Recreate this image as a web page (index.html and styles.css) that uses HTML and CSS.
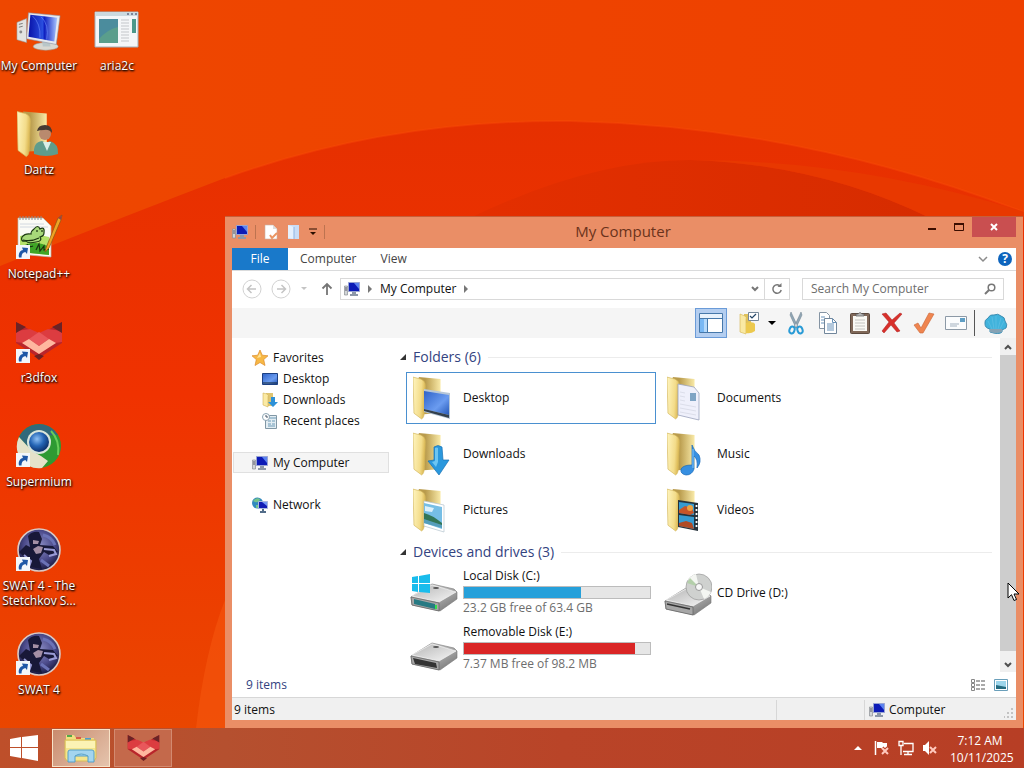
FILE: index.html
```html
<!DOCTYPE html>
<html lang="en">
<head>
  <meta charset="utf-8">
  <title>My Computer</title>
  <link rel="stylesheet" href="styles.css">
</head>
<body>
  <!-- shared icons -->
  <svg class="defs" aria-hidden="true">
    <defs>
      <linearGradient id="flap" x1="0" y1="0" x2="1" y2=".2"><stop offset="0" stop-color="#fff5bf"/><stop offset=".7" stop-color="#f3dc8a"/><stop offset="1" stop-color="#dcb955"/></linearGradient>
      <linearGradient id="back" x1="0" y1="0" x2="1" y2="0"><stop offset=".3" stop-color="#b99b4c"/><stop offset="1" stop-color="#f9eaa8"/></linearGradient>
      <linearGradient id="screen" x1="0" y1="0" x2="1" y2="0"><stop offset="0" stop-color="#0812a8"/><stop offset=".5" stop-color="#2a4fe0"/><stop offset=".55" stop-color="#0d1ec0"/><stop offset="1" stop-color="#a9c6ff"/></linearGradient>
      <linearGradient id="metal" x1="0" y1="0" x2="1" y2="1"><stop offset="0" stop-color="#f4f4f4"/><stop offset="1" stop-color="#6c6c6c"/></linearGradient>
      <linearGradient id="lid" x1="0" y1="0" x2="1" y2="1"><stop offset="0" stop-color="#b5b5b5"/><stop offset="1" stop-color="#f6f6f6"/></linearGradient>
      <linearGradient id="blue" x1="0" y1="0" x2="1" y2="1"><stop offset="0" stop-color="#2e62c8"/><stop offset=".6" stop-color="#6b9cf0"/><stop offset="1" stop-color="#2457b8"/></linearGradient>
      <radialGradient id="ball" cx=".4" cy=".35" r=".7"><stop offset="0" stop-color="#8ec0f5"/><stop offset=".5" stop-color="#2464b4"/><stop offset="1" stop-color="#0b2a62"/></radialGradient>
      <radialGradient id="night" cx=".5" cy=".4" r=".6"><stop offset="0" stop-color="#8e90c8"/><stop offset=".6" stop-color="#4b4a8a"/><stop offset="1" stop-color="#17173c"/></radialGradient>
    </defs>
    <symbol id="folder" viewBox="0 0 40 46">
      <path d="M6 1 29 3v36l-18 1z" fill="url(#back)"/>
      <path d="M0 1 8 3q5 2 5 7l-1 26q0 8-3 9L1 39z" fill="url(#flap)" stroke="#d3b65c" stroke-width=".7"/>
    </symbol>
    <symbol id="pc" viewBox="0 0 48 42">
      <path d="M1 11 11 7v25l-10-3z" fill="#e3e3e0" stroke="#9c9c98" stroke-width=".6"/>
      <path d="M3 13l4-1M3 16l4-1" stroke="#777"/><circle cx="5" cy="21" r="1.5" fill="#8a8a8a"/>
      <ellipse cx="31" cy="36" rx="13" ry="4" fill="#d8d8d2" stroke="#9d9d97" stroke-width=".6"/>
      <path d="M27 29l8 1 1 6h-8z" fill="#b9c6c8"/>
      <path d="M13 1 46 4 42 34 11 28z" fill="#e6e9ee" stroke="#8c93a0" stroke-width=".6"/>
      <path d="M15 3 43 6 40 31 13 26z" fill="url(#screen)"/>
      <path d="M17 4q9 8 8 23M26 5q9 8 6 24" fill="none" stroke="#6e90ff" opacity=".6"/>
    </symbol>
    <symbol id="pc-small" viewBox="0 0 16 16">
      <path d="M.5 5h3v9h-3z" fill="#d2d5d8" stroke="#8b8f94" stroke-width=".7"/>
      <path d="M1 7h2M1 9h2" stroke="#556"/>
      <path d="M4.500 1.500h11v9h-11z" fill="#0c1bb6" stroke="#98a4d4"/>
      <path d="M10 2h5v6z" fill="#5c83f0"/>
      <path d="M8 11h4v2h2v2H6v-2h2z" fill="#8d98a8"/>
    </symbol>
    <symbol id="shortcut" viewBox="0 0 14 14">
      <path d="M0 0h14v14H0z" fill="#f2f6fa"/>
      <path d="M3 12.500C2 8.500 4 5.500 7 5L6 2.500 12 3l-1 6-1.700-2C6.500 7.500 5.500 9.500 5.500 12.500z" fill="#1e57a6"/>
    </symbol>
    <symbol id="fox" viewBox="0 0 48 38">
      <path d="M1 0 15 8 24 12 33 8 47 0V21L24 36 1 21z" fill="#b9252b"/>
      <path d="M1 9 15 7l9 4-9 6-7 4-7-1zM47 9 33 7l-9 4 9 6 7 4 7-1z" fill="#dc3c40"/>
      <path d="M1 0l10 5-10 6zM47 0 37 5l10 6z" fill="#6a2326"/>
      <path d="M24 10 34 17 24 24 14 17z" fill="#e9575b"/>
      <path d="M7 21 14 17 24 24 34 17 41 21 24 32z" fill="#ffb79f"/>
      <path d="M24 32l5 2-5 4-5-4z" fill="#6e2022"/>
    </symbol>
    <symbol id="swat" viewBox="0 0 48 48">
      <circle cx="24" cy="24" r="21" fill="url(#night)" stroke="#d8c9c6" stroke-width="1.600"/>
      <path d="M13 10q4-5 11-4l3 7-2 6 13 1 5 6-9 3-5-3-5 7 3 10-12-2-5-9-6-6 7-7 4 2z" fill="#181838"/>
      <path d="M18 14l6 1-1 3h-5zM18 23l5-3 5 1-2 6-5 1z" fill="#a48fa5"/>
      <path d="M29 23l10 1 2 4-7 2M9 29l7 6-2 6" fill="none" stroke="#9a9cd6" stroke-width="2"/>
      <path d="M28 9q9 2 12 10M26 34l8 6" stroke="#6b72b6" stroke-width="3" fill="none"/>
    </symbol>
    <symbol id="drive" viewBox="0 0 48 30">
      <path d="M1 14 22 1 44 6 47 9v7L30 28 2 22z" fill="url(#metal)" stroke="#777" stroke-width=".6"/>
      <path d="M2 13 22 2 46 9 29 19z" fill="url(#lid)" stroke="#f4f4f4" stroke-width=".7"/>
      <path d="M1 14 29 20v8L2 22z" fill="#a7a7a7" stroke="#606060" stroke-width=".7"/>
      <ellipse cx="26" cy="5" rx="3" ry="1" fill="#555"/>
    </symbol>
    <symbol id="winlogo" viewBox="0 0 28 26">
      <path d="M0 4 11 2v10H0zM12 2 28 0v12H12zM0 13h11v10L0 21zM12 13h16v13l-16-3z" fill="currentColor"/>
    </symbol>
  </svg>

  <div class="screen">
    <main class="desktop">
      <svg class="wallpaper" viewBox="0 0 1024 728" preserveAspectRatio="none" aria-hidden="true">
        <defs>
          <linearGradient id="sky" x1="0" y1="0" x2="1" y2="0"><stop offset="0" stop-color="#ee4700"/><stop offset="1" stop-color="#ee4000"/></linearGradient>
          <linearGradient id="arc" x1="0" y1="0" x2="0" y2="1"><stop offset="0" stop-color="#e63000"/><stop offset=".45" stop-color="#f03200"/><stop offset="1" stop-color="#ea4600"/></linearGradient>
          <linearGradient id="inner" x1="0" y1="0" x2="1" y2="0"><stop offset="0" stop-color="#e42f00"/><stop offset="1" stop-color="#d62c00"/></linearGradient>
        </defs>
        <rect width="1024" height="728" fill="url(#sky)"/>
        <path d="M0 266Q120 218 225 178Q390 119 570 121Q800 126 1024 212V728H0z" fill="url(#arc)"/>
        <path d="M225 178Q390 119 570 121Q800 126 1024 212" fill="none" stroke="#fb4c08" stroke-width="2" opacity=".4"/>
        <path d="M470 218Q590 160 690 160Q820 164 930 218z" fill="url(#inner)"/>
        <path d="M690 160Q820 164 930 218H1024V212Q860 160 690 160z" fill="#e83800"/>
        <path d="M196 728Q205 650 225 600V728z" fill="#f75a10" opacity=".5"/>
      </svg>

      <div class="shortcuts">
        <a class="shortcut" href="#">
          <svg class="icon" viewBox="0 0 48 48"><use href="#pc" x="1" y="5" width="46" height="42"/></svg>
          <span>My Computer</span>
        </a>
        <a class="shortcut" href="#">
          <svg class="icon" viewBox="0 0 48 48"><use href="#folder" x="2" y="0" width="41" height="48"/><path d="M19 44q-1-12 8-13l4 2 4-2q9 3 8 13-12 4-24 0z" fill="#5f9c8c"/><path d="M28 32l4 9 4-9z" fill="#d9efe8"/><circle cx="30" cy="24" r="6" fill="#b98a6e"/><path d="M22 21q1-6 8-6t7 8q-3-4-8-3-4 0-7 1z" fill="#463a32"/></svg>
          <span>Dartz</span>
        </a>
        <a class="shortcut" href="#">
          <svg class="icon" viewBox="0 0 48 48"><path d="M3 4h25l8 8v31l-33-3z" fill="#fbfbf6" stroke="#b7bcae" stroke-width=".7"/><path d="M5 2v4M8 2v4M11 2v4M14 2v4M17 2v4M20 2v4M23 2v4M26 2v4" stroke="#8d8d8d"/><path d="M5 10h24M5 13h28" stroke="#d2d8df"/><path d="M5 22q12-4 29 1v18L5 38z" fill="#b5e26a"/><path d="M5 33q16-8 29 0v8L5 38z" fill="#3fa526"/><path d="M19 15q4-5 6 0 5-3 4 4 0 3-4 4 3 4-4 5-8 2-10-1-6 1-4-4 3-4 9-3 0-3 3-5z" fill="#a8d97a" stroke="#1d3a12" stroke-width="1.200"/><path d="M8 26q8 2 16-2M12 30q2 4 6 2M22 16v2M27 16v2M21 36l3-6 1 7 4-5v4l5-1" fill="none" stroke="#1a3310" stroke-width="1.200"/><path d="M31 34 43 4l4-3-1 5-12 28-4 4z" fill="#eda325" stroke="#8a5513" stroke-width=".7"/><path d="M43 4l4-3-1 5z" fill="#9b4444"/><use href="#shortcut" x="1" y="31" width="14" height="14"/></svg>
          <span>Notepad++</span>
        </a>
        <a class="shortcut" href="#">
          <svg class="icon" viewBox="0 0 48 48"><use href="#fox" x="0" y="4" width="48" height="38"/><use href="#shortcut" x="1" y="31" width="14" height="14"/></svg>
          <span>r3dfox</span>
        </a>
        <a class="shortcut" href="#">
          <svg class="icon" viewBox="0 0 48 48"><circle cx="24" cy="24" r="22" fill="#2e9a33"/><path d="M4 15A22 22 0 0 1 43 13L25 14 17 29z" fill="#31697b"/><path d="M4 15 17 29 26 34 33 39 27 46A22 22 0 0 1 4 15z" fill="#e5e2c9"/><path d="M36 9q9 9 7 24" fill="none" stroke="#68ce59" stroke-width="2"/><circle cx="24" cy="20" r="12" fill="#d9e5db"/><circle cx="24" cy="20" r="10" fill="url(#ball)"/><use href="#shortcut" x="1" y="31" width="14" height="14"/></svg>
          <span>Supermium</span>
        </a>
        <a class="shortcut" href="#">
          <svg class="icon" viewBox="0 0 48 48"><use href="#swat" width="48" height="48"/><use href="#shortcut" x="1" y="31" width="14" height="14"/></svg>
          <span>SWAT 4 - The Stetchkov S...</span>
        </a>
        <a class="shortcut" href="#">
          <svg class="icon" viewBox="0 0 48 48"><use href="#swat" width="48" height="48"/><use href="#shortcut" x="1" y="31" width="14" height="14"/></svg>
          <span>SWAT 4</span>
        </a>
        <a class="shortcut" href="#">
          <svg class="icon" viewBox="0 0 48 48"><path d="M2 6h43v35H2z" fill="#f4f6f8" stroke="#9fb2bd"/><path d="M2 6h43v4H2z" fill="#cbd9df"/><path d="M34 8h2M38 8h2M42 8h2" stroke="#335"/><path d="M6 13h19v24H6z" fill="#5a9e8c"/><path d="M6 13h19v8q-10 2-19 12z" fill="#4b8c9d"/><path d="M28 14h8M28 17h8M28 20h8M28 23h8M28 26h8M28 29h8M28 32h8M28 35h8" stroke="#c3c6ca"/><path d="M39 13h4v14h-4z" fill="#4c988b"/></svg>
          <span>aria2c</span>
        </a>
      </div>

      <section class="window">
        <header class="titlebar">
          <div class="quick">
            <svg width="16" height="16"><use href="#pc-small"/></svg>
            <i class="divider"></i>
            <button aria-label="Properties"><svg width="16" height="16" viewBox="0 0 16 16"><path d="M2 1h8l4 4v10H2z" fill="#fff" stroke="#c9b4a6" stroke-width=".6"/><path d="M10 1v4h4" fill="#ddd"/><path d="M7 11l2 3 5-5" fill="none" stroke="#eb9562" stroke-width="2"/></svg></button>
            <button aria-label="New folder"><svg width="16" height="16" viewBox="0 0 16 16"><path d="M2 1h11v14H2z" fill="#c9dcf5"/><path d="M2 1l6 2v12l-6-1z" fill="#e6f0fc"/><path d="M8 3v12" stroke="#8fb3e2"/></svg></button>
            <button aria-label="Customize"><svg width="8" height="8" viewBox="0 0 8 8"><path d="M0 1h8" stroke="#2a0f00"/><path d="M1 4h6L4 7z" fill="#2a0f00"/></svg></button>
            <i class="divider"></i>
          </div>
          <h1 class="title">My Computer</h1>
          <div class="controls">
            <button aria-label="Minimize"><svg width="10" height="8" viewBox="0 0 10 8"><path d="M1 6h8" stroke="#3a0d00" stroke-width="2"/></svg></button>
            <button aria-label="Maximize"><svg width="10" height="8" viewBox="0 0 10 8"><path d="M.5 1v6.500h9V1" fill="none" stroke="#3a0d00"/><path d="M0 1h10" stroke="#3a0d00" stroke-width="2"/></svg></button>
            <button class="close" aria-label="Close"><svg width="8" height="8" viewBox="0 0 8 8"><path d="M1 1l6 6M7 1 1 7" stroke="#fff" stroke-width="2"/></svg></button>
          </div>
        </header>

        <div class="client">
          <nav class="tabs">
            <button class="tab file">File</button>
            <button class="tab">Computer</button>
            <button class="tab">View</button>
            <span class="spacer"></span>
            <button class="tool-mini" aria-label="Expand the ribbon"><svg width="10" height="8" viewBox="0 0 10 8"><path d="M1 2l4 4 4-4" fill="none" stroke="#8b8b8b" stroke-width="1.500"/></svg></button>
            <button class="help" aria-label="Help">?</button>
          </nav>

          <div class="address-row">
            <button class="nav" aria-label="Back"><svg width="20" height="20" viewBox="0 0 20 20"><circle cx="10" cy="10" r="9" fill="none" stroke="#d2d2d2"/><path d="M14 10H6M9.500 6 5.500 10l4 4" fill="none" stroke="#c4c4c4" stroke-width="1.500"/></svg></button>
            <button class="nav" aria-label="Forward"><svg width="20" height="20" viewBox="0 0 20 20"><circle cx="10" cy="10" r="9" fill="none" stroke="#d2d2d2"/><path d="M6 10h8M10.500 6l4 4-4 4" fill="none" stroke="#c4c4c4" stroke-width="1.500"/></svg></button>
            <button class="nav small" aria-label="Recent locations"><svg width="6" height="4" viewBox="0 0 6 4"><path d="M0 0h6L3 3z" fill="#c4c4c4"/></svg></button>
            <button class="nav up" aria-label="Up"><svg width="12" height="14" viewBox="0 0 12 14"><path d="M6 13V2M1.500 6.500 6 2l4.500 4.500" fill="none" stroke="#757575" stroke-width="1.800"/></svg></button>
            <div class="address">
              <svg width="16" height="16"><use href="#pc-small"/></svg>
              <svg width="4" height="8" viewBox="0 0 4 8"><path d="M0 0l4 4-4 4z" fill="#777"/></svg>
              <a href="#">My Computer</a>
              <svg width="4" height="8" viewBox="0 0 4 8"><path d="M0 0l4 4-4 4z" fill="#777"/></svg>
              <span class="spacer"></span>
              <button class="drop" aria-label="Previous locations"><svg width="8" height="6" viewBox="0 0 8 6"><path d="M1 1l3 3 3-3" fill="none" stroke="#777" stroke-width="2"/></svg></button>
              <button class="refresh" aria-label="Refresh"><svg width="12" height="12" viewBox="0 0 12 12"><path d="M9.500 3.500A4.200 4.200 0 1 0 10.200 7" fill="none" stroke="#777" stroke-width="1.500"/><path d="M6.500 4h4V0z" fill="#777"/></svg></button>
            </div>
            <div class="search">
              <input type="text" placeholder="Search My Computer" aria-label="Search My Computer">
              <svg width="12" height="12" viewBox="0 0 12 12"><circle cx="7.500" cy="4.500" r="3.300" fill="none" stroke="#777" stroke-width="1.500"/><path d="M5 7 1 11" stroke="#777" stroke-width="2"/></svg>
            </div>
          </div>

          <div class="toolbar">
            <button class="active" aria-label="Navigation pane"><svg width="24" height="24" viewBox="0 0 24 24"><path d="M.5 2.500h23v19H.5z" fill="#fff" stroke="#4678aa"/><path d="M1 3h22v4H1z" fill="#e8f2fc"/><path d="M1 8h8v13H1z" fill="#b4d9fb"/><path d="M1 8h4v13H1z" fill="#79b8f4"/><path d="M0 7.500h24M8.500 8v13" stroke="#4678aa"/></svg></button>
            <button class="select" aria-label="Select"><svg width="24" height="24" viewBox="0 0 24 24"><path d="M7 3h7v17H7z" fill="#dfc15a"/><path d="M3 3l5 2q2 1 1 4v14l-6-2z" fill="#f9e9a3" stroke="#d4b44e" stroke-width=".6"/><path d="M9 12q8-2 9 1v7q-4 3-9 2z" fill="#ecc94e"/><path d="M11.500 1.500h10v8h-10z" fill="#fff" stroke="#789"/><path d="M13 5l2 2 4-4" fill="none" stroke="#246" stroke-width="1.200"/></svg><svg width="8" height="5" viewBox="0 0 8 5"><path d="M0 0h8L4 4z" fill="#000"/></svg></button>
            <button aria-label="Cut"><svg width="24" height="24" viewBox="0 0 24 24"><path d="M7 1l7 15-2 1L6 4zM17 1l-7 15 2 1 6-13z" fill="#91a6b5" stroke="#6b7e8d" stroke-width=".5"/><ellipse cx="8" cy="19" rx="2.500" ry="3.500" fill="none" stroke="#299bd6" stroke-width="2" transform="rotate(20 8 19)"/><ellipse cx="16" cy="19" rx="2.500" ry="3.500" fill="none" stroke="#299bd6" stroke-width="2" transform="rotate(-20 16 19)"/></svg></button>
            <button aria-label="Copy"><svg width="24" height="24" viewBox="0 0 24 24"><path d="M3.500 1.500h7l3 3v13h-10z" fill="#fff" stroke="#8594a3"/><path d="M8.500 7.500h8l4 4v11h-12z" fill="#fff" stroke="#71869b"/><path d="M16.500 7.500v4h4M11 13h7M11 15h7M11 17h7M11 19h7M5 6h4M5 9h3M5 12h3" fill="none" stroke="#6892ba"/></svg></button>
            <button aria-label="Paste"><svg width="24" height="24" viewBox="0 0 24 24"><rect x="2.500" y="2.500" width="19" height="20" rx="1" fill="#806858" stroke="#5c4a3e"/><path d="M5 5h14v15H5z" fill="#faf9f4"/><path d="M7 9h10M7 12h10M7 15h10M7 18h10" stroke="#c4c4c0"/><path d="M8 5V3h2q2-3 4 0h2v2z" fill="#b8b8b8" stroke="#555" stroke-width=".7"/></svg></button>
            <button aria-label="Delete"><svg width="24" height="24" viewBox="0 0 24 24"><path d="M2 3l4-1 6 7 8-7 2 1-8 9 6 8-3 1-6-7-7 8-2-2 7-9z" fill="#d8302b" stroke="#ad1d1d" stroke-width=".5"/></svg></button>
            <button aria-label="Properties"><svg width="24" height="24" viewBox="0 0 24 24"><path d="M2 14l4-2 3 5L17 2l5 1L11 22H8z" fill="#ef8550" stroke="#c96535" stroke-width=".6"/></svg></button>
            <button aria-label="E-mail"><svg width="24" height="24" viewBox="0 0 24 24"><path d="M1.500 5.500h21v13h-21z" fill="#fbfcfd" stroke="#8c99a6"/><path d="M16 7h5v4h-5z" fill="#5f9ec4"/><path d="M6 13h9M6 15h7" stroke="#a3b1bf"/></svg></button>
            <i class="divider"></i>
            <button aria-label="Classic shell settings"><svg width="24" height="24" viewBox="0 0 24 24"><path d="M6 21v-3q-5-1-5-5-1-4 3-6 2-4 6-3 4-2 7 1 4 1 4 5 3 4 1 7-2 1-4 2v2q-3 3-12 0z" fill="#41b3dc" stroke="#3f8db2"/><path d="M8 18 4 10M10 18 8 6M12 18V5M14 18l3-11M16 18l4-8" stroke="#58bce2" fill="none"/><path d="M6 18h12v3q-6 2-12 0z" fill="#86a2b4"/></svg></button>
          </div>

          <div class="body">
            <aside class="sidebar">
              <a href="#"><svg width="16" height="16" viewBox="0 0 16 16"><path d="M8 0l2.300 5.200 5.700.6-4.300 3.800 1.300 5.900L8 12.500l-5 3 1.300-5.900L0 5.800l5.700-.6z" fill="#f7b844" stroke="#dc8b2b" stroke-width=".7"/><path d="M8 3l1 4-4 1z" fill="#ffe49a"/></svg>Favorites</a>
              <a class="child" href="#"><svg width="16" height="16" viewBox="0 0 16 16"><path d="M.5 2.500h15v11H.5z" fill="url(#blue)" stroke="#1c4083"/><path d="M1 12h14" stroke="#123"/></svg>Desktop</a>
              <a class="child" href="#"><svg width="16" height="16" viewBox="0 0 16 16"><path d="M4 1h7v13H4z" fill="#dfc571"/><path d="M1 1l4 1q2 1 1 3v10l-5-2z" fill="#fbeaa4" stroke="#d0b258" stroke-width=".6"/><path d="M9 5h4v5h3l-5 5-5-5h3z" fill="#2d91d8"/></svg>Downloads</a>
              <a class="child" href="#"><svg width="16" height="16" viewBox="0 0 16 16"><path d="M3.500 2.500h11v13h-11z" fill="#e3edf3" stroke="#8197a5"/><path d="M6 5h8M6 8h3M10 8h3M6 11h3M10 11h3M6 13h7" stroke="#6d9ab6"/><circle cx="4" cy="4" r="3.500" fill="#fff" stroke="#8ba3b2"/><path d="M4 2v2h2" fill="none" stroke="#456"/></svg>Recent places</a>
              <a class="group selected" href="#"><svg width="16" height="16"><use href="#pc-small"/></svg>My Computer</a>
              <a class="group" href="#"><svg width="16" height="16" viewBox="0 0 16 16"><circle cx="5.500" cy="6" r="5.500" fill="#3289be"/><path d="M1 4q3-4 7-2-1 4-5 3zM4 8h4v3H4z" fill="#73c38a"/><path d="M6.500 4.500h9v7h-9z" fill="#101db5" stroke="#a7b8dd"/><path d="M10 5h5v4z" fill="#7398f6"/><path d="M10 12h2v2h2v2H8v-2h2z" fill="#526c89"/></svg>Network</a>
            </aside>

            <div class="content">
              <h2 class="heading"><svg width="6" height="6" viewBox="0 0 6 6"><path d="M6 0v6H0z" fill="#333"/></svg>Folders (6)</h2>
              <div class="grid">
                <a class="item selected" href="#"><svg class="icon" viewBox="0 0 48 48"><use href="#folder" x="3" y="2" width="38" height="44"/><path d="M14 15l26 4v26l-26-7z" fill="#b7c7d7"/><path d="M14 17l25 4v20l-25-6z" fill="url(#blue)"/><path d="M14 35l25 6v3l-25-7z" fill="#33404d"/></svg><span>Desktop</span></a>
                <a class="item" href="#"><svg class="icon" viewBox="0 0 48 48"><use href="#folder" x="3" y="2" width="38" height="44"/><path d="M14 10l16 3 5 6v27l-21-5z" fill="#eff0fb" stroke="#9aa2bd" stroke-width=".8"/><path d="M26 19h6v8h-6z" fill="#7fa4c4"/><path d="M16 18l5 1M16 22l5 1M16 26l5 1M16 30l16 3M16 34l16 3M16 38l16 3" stroke="#dcdeea"/></svg><span>Documents</span></a>
                <a class="item" href="#"><svg class="icon" viewBox="0 0 48 48"><use href="#folder" x="3" y="2" width="38" height="44"/><path d="M24 17q4-3 8 0l1 13h6L29 45 18 31l6-1z" fill="#2a98dd" stroke="#1871b5" stroke-width=".7"/><path d="M25 18q2-1 3 0v14l-2 5-4-5 3-1z" fill="#6cc5f2"/></svg><span>Downloads</span></a>
                <a class="item" href="#"><svg class="icon" viewBox="0 0 48 48"><use href="#folder" x="3" y="2" width="38" height="44"/><path d="M28 15q2 6 7 10 3 7-2 13 1-9-3-12v13q-2 6-8 6-6-1-5-6 2-4 11-4z" fill="#368fe1" stroke="#1769b8" stroke-width=".7"/><path d="M29 19v19" stroke="#80c6fa"/></svg><span>Music</span></a>
                <a class="item" href="#"><svg class="icon" viewBox="0 0 48 48"><use href="#folder" x="3" y="2" width="38" height="44"/><path d="M14 15l20 4v27l-20-6z" fill="#fff" stroke="#b4c4ce" stroke-width=".7"/><path d="M14 17l18 4v22l-18-6z" fill="#76bee5"/><path d="M15 20l9 2-2 4-7-1z" fill="#ddf0fa"/><path d="M14 27q8 2 18 10v3l-18-5z" fill="#327657"/><path d="M14 33l18 6v3l-18-5z" fill="#569ebb"/></svg><span>Pictures</span></a>
                <a class="item" href="#"><svg class="icon" viewBox="0 0 48 48"><use href="#folder" x="3" y="2" width="38" height="44"/><path d="M14 14l20 3v28l-20-4z" fill="#26323b"/><path d="M15 16l15 2v11l-15-2zM15 29l15 2v12l-15-3z" fill="#369bd1"/><path d="M15 24l6-4 7 2 2 5-4 2-11-2z" fill="#c85528"/><circle cx="26" cy="22" r="3" fill="#efa33e"/><path d="M15 37l7-2 6 2 2 6-15-3z" fill="#b04b26"/><path d="M32.500 19v24" stroke="#fff" stroke-width="1.800" stroke-dasharray="2 2"/></svg><span>Videos</span></a>
              </div>

              <h2 class="heading"><svg width="6" height="6" viewBox="0 0 6 6"><path d="M6 0v6H0z" fill="#333"/></svg>Devices and drives (3)</h2>
              <div class="grid">
                <a class="item" href="#">
                  <svg class="icon" viewBox="0 0 48 48"><use href="#drive" x="0" y="14" width="48" height="30"/><path d="M4 30l21 5v5L4 35z" fill="#277a83"/><path d="M26 36v4" stroke="#36e24c" stroke-width="2"/><path d="M2 8l6-1v7H2zM9 7l11-2v9H9zM2 15h6v8l-6-1zM9 15h11v9L9 23z" fill="#19bcec"/></svg>
                  <span class="disk">
                    <span>Local Disk (C:)</span>
                    <span class="bar"><span class="fill" style="width: 63%"></span></span>
                    <span class="free">23.2 GB free of 63.4 GB</span>
                  </span>
                </a>
                <a class="item" href="#"><svg class="icon" viewBox="0 0 48 48"><use href="#drive" x="0" y="18" width="48" height="30"/><circle cx="35" cy="18" r="13" fill="#cfd1cf" stroke="#999" stroke-width=".7"/><path d="M35 18 24 11a13 13 0 0 1 8-6zM35 18l12 5q-3 6-7 7z" fill="#f4f6f2"/><path d="M35 18 23 14l3-5z" fill="#b4cfaa"/><circle cx="35" cy="18" r="3.500" fill="#f8f8f8" stroke="#999"/><path d="M3 35l23 5" stroke="#333" stroke-width="1.500"/></svg><span>CD Drive (D:)</span></a>
                <a class="item" href="#">
                  <svg class="icon" viewBox="0 0 48 48"><use href="#drive" x="0" y="17" width="48" height="30"/><path d="M3 33l23 5 1 5-22-4z" fill="#333"/></svg>
                  <span class="disk">
                    <span>Removable Disk (E:)</span>
                    <span class="bar"><span class="fill full" style="width: 92%"></span></span>
                    <span class="free">7.37 MB free of 98.2 MB</span>
                  </span>
                </a>
              </div>
            </div>

            <div class="scrollbar">
              <button aria-label="Scroll up"><svg width="8" height="6" viewBox="0 0 8 6"><path d="M1 5l3-3 3 3" fill="none" stroke="#505050" stroke-width="2"/></svg></button>
              <div class="thumb"></div>
              <button class="down" aria-label="Scroll down"><svg width="8" height="6" viewBox="0 0 8 6"><path d="M1 1l3 3 3-3" fill="none" stroke="#505050" stroke-width="2"/></svg></button>
            </div>
          </div>

          <div class="details">
            <span>9 items</span>
            <span class="spacer"></span>
            <button aria-label="Details view"><svg width="16" height="14" viewBox="0 0 16 14"><path d="M1.500 1.500h3v3h-3zM1.500 5.500h3v3h-3zM1.500 9.500h3v3h-3z" fill="#fff" stroke="#888"/><path d="M6 3h4M11 3h4M6 7h4M11 7h4M6 11h4M11 11h4" stroke="#555"/></svg></button>
            <button aria-label="Large icons view"><svg width="14" height="14" viewBox="0 0 14 14"><path d="M.5 1.500h13v11H.5z" fill="#fff" stroke="#6a9fba"/><path d="M2 3h10v8H2z" fill="#9cd5eb"/><path d="M2 7l10 2v2H2z" fill="#246b80"/></svg></button>
          </div>

          <footer class="statusbar">
            <span class="count">9 items</span>
            <span class="cell"></span>
            <span class="cell place"><svg width="16" height="16"><use href="#pc-small"/></svg>Computer</span>
            <svg class="grip" width="10" height="10" viewBox="0 0 10 10"><path d="M7 0h2v2H7zM7 4h2v2H7zM7 8h2v2H7zM3 4h2v2H3zM3 8h2v2H3zM0 8h1v2H0z" fill="#c3c3c3"/></svg>
          </footer>
        </div>
      </section>
    </main>

    <footer class="taskbar">
      <button class="start" aria-label="Start"><svg width="28" height="26"><use href="#winlogo"/></svg></button>
      <button class="task open" aria-label="File Explorer"><svg width="34" height="32" viewBox="0 0 34 32"><path d="M2 3h8l2 3h18v3H2z" fill="#f1df80"/><path d="M3 3h5v2H3z" fill="#55a84b"/><path d="M12 5h5v2h-5z" fill="#d85c46"/><path d="M21 6h6v2h-6z" fill="#4b9dcd"/><path d="M1 8h31v18l-2 3H3l-2-3z" fill="#f4e58c" stroke="#d7bc56"/><path d="M2 9h29v7H2z" fill="#fcf3b4"/><path d="M6 18h22q2 0 2 2v10h-6v-6H11v6H4V20q0-2 2-2z" fill="#a3d5ef" stroke="#559fc8"/><path d="M11 24q6-4 13 0" fill="none" stroke="#5aa3c7"/></svg></button>
      <button class="task" aria-label="r3dfox"><svg width="33" height="26" viewBox="0 0 48 38"><use href="#fox"/></svg></button>
      <span class="spacer"></span>
      <button class="tray" aria-label="Show hidden icons"><svg width="8" height="5" viewBox="0 0 8 5"><path d="M0 4h8L4 0z" fill="#fff"/></svg></button>
      <button class="tray" aria-label="Action Center"><svg width="16" height="16" viewBox="0 0 16 16"><path d="M1.500 1v14" stroke="#fff" stroke-width="1.500"/><path d="M3 2h5l1 1h4v6H8L7 8H3z" fill="#fff"/><path d="M8 8l6 6M14 8l-6 6" stroke="#b83f26" stroke-width="4"/><path d="M8 8l6 6M14 8l-6 6" stroke="#ffc9bd" stroke-width="2"/></svg></button>
      <button class="tray" aria-label="Network"><svg width="16" height="16" viewBox="0 0 16 16"><path d="M6 3.500h9v8H5" fill="none" stroke="#fff" stroke-width="1.300"/><path d="M10 11v3M6 14.500h8" stroke="#fff" stroke-width="1.300"/><path d="M1 1.500h4v4H1zM3 6v9" fill="none" stroke="#fff" stroke-width="1.300"/></svg></button>
      <button class="tray" aria-label="Volume muted"><svg width="16" height="16" viewBox="0 0 16 16"><path d="M1 5h2l4-4v14l-4-4H1z" fill="#fff"/><path d="M8 7l6 6M14 7l-6 6" stroke="#ffc9bd" stroke-width="2"/></svg></button>
      <time class="clock"><span>7:12 AM</span><span>10/11/2025</span></time>
    </footer>

    <svg class="cursor" width="13" height="20" viewBox="0 0 13 20" aria-hidden="true"><path d="M1 1v15l3.500-3.300L7 18.500l2.500-1L7 12h5z" fill="#fff" stroke="#000"/></svg>
  </div>
</body>
</html>
```
FILE: styles.css
```css
* {
  box-sizing: border-box;
}

body {
  margin: 0;
  font-family: "Open Sans", "Noto Sans", sans-serif;
  font-size: 12px;
  line-height: 16px;
  color: #111;
}

a {
  color: inherit;
  text-decoration: none;
}

button {
  display: flex;
  align-items: center;
  justify-content: center;
  padding: 0;
  border: none;
  background: none;
  font: inherit;
  color: inherit;
}

svg {
  display: block;
  flex-shrink: 0;
}

h1, h2 {
  margin: 0;
  font-weight: normal;
}

.defs {
  position: absolute;
  width: 0;
  height: 0;
}

.spacer {
  flex: 1;
}

.screen {
  display: flex;
  flex-direction: column;
  height: 100vh;
  overflow: hidden;
  position: relative;
}

/* desktop */
.desktop {
  flex: 1;
  min-height: 0;
  position: relative;
  background: #f03a00;
}

.wallpaper {
  position: absolute;
  inset: 0;
  width: 100%;
  height: 100%;
}

.shortcuts {
  position: relative;
  display: grid;
  grid-auto-flow: column;
  grid-template-rows: repeat(7, 104px);
  grid-auto-columns: 78px;
  height: 100%;
  padding-top: 6px;
}

.shortcut {
  display: flex;
  flex-direction: column;
  align-items: center;
  gap: 4px;
  line-height: 15px;
  text-align: center;
  color: #fff;
  text-shadow: 1px 1px 2px #000, 0 1px 2px rgba(0, 0, 0, 0.8);
}

.icon {
  width: 48px;
  height: 48px;
}

/* explorer window */
.window {
  position: absolute;
  top: 216px;
  left: 225px;
  right: 1px;
  bottom: 0;
  display: flex;
  flex-direction: column;
  padding: 0 7px 8px;
  background: #ea8e66;
  border-top: 1px solid #c75f3a;
}

.titlebar {
  display: flex;
  height: 31px;
}

.quick {
  display: flex;
  align-items: center;
  gap: 7px;
  width: 96px;
  padding-bottom: 2px;
}

.divider {
  flex-shrink: 0;
  width: 1px;
  height: 14px;
  background: #bd7350;
}

.title {
  flex: 1;
  font-size: 15px;
  line-height: 28px;
  text-align: center;
  color: #6b331c;
}

.controls {
  display: flex;
  height: 20px;
}

.controls button {
  width: 27px;
}

.controls .close {
  width: 44px;
  background: #c94f50;
}

.client {
  flex: 1;
  min-height: 0;
  display: flex;
  flex-direction: column;
  background: #fff;
}

.tabs {
  display: flex;
  align-items: center;
  height: 23px;
  padding-right: 4px;
  border-bottom: 1px solid #dadbdc;
}

.tab {
  height: 22px;
  padding: 0 12px;
  color: #444;
}

.tab.file {
  width: 56px;
  background: #1979ca;
  color: #fff;
}

.tool-mini {
  width: 16px;
  margin-right: 7px;
}

.help {
  width: 14px;
  height: 14px;
  border-radius: 50%;
  background: #0d64bd;
  color: #fff;
  font-weight: bold;
}

.address-row {
  display: flex;
  align-items: center;
  height: 37px;
  padding: 0 12px 1px 10px;
}

.nav {
  width: 20px;
  margin-right: 9px;
}

.nav.small {
  width: 8px;
}

.nav.up {
  margin-right: 3px;
}

.address {
  flex: 1;
  display: flex;
  align-items: center;
  gap: 8px;
  height: 22px;
  padding-left: 3px;
  border: 1px solid #d9d9d9;
}

.drop {
  width: 12px;
  margin-right: -5px;
}

.refresh {
  width: 25px;
  height: 20px;
  border-left: 1px solid #d9d9d9;
}

.search {
  display: flex;
  align-items: center;
  width: 202px;
  height: 22px;
  margin-left: 12px;
  padding: 0 7px 0 8px;
  border: 1px solid #d9d9d9;
}

.search input {
  flex: 1;
  min-width: 0;
  padding: 0;
  border: none;
  outline: none;
  font: inherit;
}

.search input::placeholder {
  color: #6d6d6d;
}

.toolbar {
  display: flex;
  align-items: center;
  justify-content: flex-end;
  height: 30px;
  padding-right: 4px;
  background: #f5f5f5;
}

.toolbar button {
  width: 32px;
  height: 30px;
}

.toolbar .active {
  background: #b4cef0;
  border: 1px solid #6a9bd8;
}

.toolbar .select {
  width: 53px;
  gap: 7px;
  padding-left: 5px;
}

.toolbar .divider {
  height: 26px;
  margin: 0 5px 0 2px;
  background: #555;
}

.body {
  flex: 1;
  min-height: 0;
  display: flex;
}

.sidebar {
  width: 158px;
  padding: 9px 1px 0;
}

.sidebar a {
  display: flex;
  align-items: center;
  gap: 5px;
  height: 21px;
  padding-left: 19px;
}

.sidebar .child {
  padding-left: 29px;
}

.sidebar .group {
  margin-top: 21px;
}

.sidebar .selected {
  background: #f5f5f5;
  border: 1px solid #e0e0e0;
  padding-left: 18px;
}

.content {
  flex: 1;
  min-width: 0;
  overflow: hidden;
  padding: 9px 8px 0 10px;
}

.heading {
  display: flex;
  align-items: center;
  gap: 7px;
  height: 20px;
  margin-bottom: 5px;
  font-size: 14px;
  color: #33437f;
}

.heading::after {
  content: "";
  flex: 1;
  height: 1px;
  background: #ececec;
}

.grid {
  display: grid;
  grid-template-columns: repeat(auto-fill, 250px);
  gap: 4px;
  padding-left: 6px;
  margin-bottom: 6px;
}

.item {
  display: flex;
  align-items: center;
  gap: 5px;
  height: 52px;
  padding-left: 3px;
  border: 1px solid transparent;
}

.item.selected {
  border-color: #4a90d0;
}

.disk {
  display: flex;
  flex-direction: column;
  width: 188px;
  height: 50px;
}

.bar {
  height: 13px;
  margin: 2px 0 1px;
  background: #e6e6e6;
  border: 1px solid #bcbcbc;
}

.fill {
  display: block;
  height: 100%;
  background: #26a0da;
}

.fill.full {
  background: #da2626;
}

.free {
  color: #6d6d6d;
}

.scrollbar {
  display: flex;
  flex-direction: column;
  width: 16px;
  background: #f0f0f0;
}

.scrollbar button {
  height: 17px;
}

.scrollbar .down {
  height: 21px;
  padding-top: 6px;
}

.thumb {
  flex: 1;
  background: #cdcdcd;
}

.details {
  display: flex;
  align-items: center;
  gap: 8px;
  height: 25px;
  padding: 1px 8px 0 14px;
  color: #33437f;
}

.statusbar {
  display: flex;
  align-items: center;
  height: 23px;
  padding-top: 1px;
  background: #f0f0f0;
  border-top: 1px solid #d7d7d7;
}

.count {
  flex: 1;
  padding-left: 2px;
}

.cell {
  display: flex;
  align-items: center;
  gap: 4px;
  width: 88px;
  height: 20px;
  border-left: 1px solid #d7d7d7;
}

.cell.place {
  width: 140px;
  padding-left: 4px;
}

.grip {
  align-self: flex-end;
  margin: 0 2px 2px 0;
}

/* taskbar */
.taskbar {
  display: flex;
  align-items: center;
  height: 40px;
  padding-right: 14px;
  background: linear-gradient(90deg, #be4f2a, #b5502f 22%, #b94428 55%, #b73e25);
  color: #fff;
}

.start {
  width: 48px;
}

.task {
  width: 58px;
  height: 38px;
  margin-left: 4px;
  background: #c4694b;
  border: 1px solid #d38a70;
}

.task.open {
  background: linear-gradient(135deg, #c98b6e, #e5c4ad);
  border-color: #f8e3c8;
}

.tray {
  width: 24px;
  height: 40px;
}

.clock {
  display: flex;
  flex-direction: column;
  width: 60px;
  margin-left: 8px;
  padding-top: 2px;
  text-align: center;
  line-height: 17px;
}

/* mouse pointer */
.cursor {
  position: absolute;
  left: 1007px;
  top: 582px;
}
```
